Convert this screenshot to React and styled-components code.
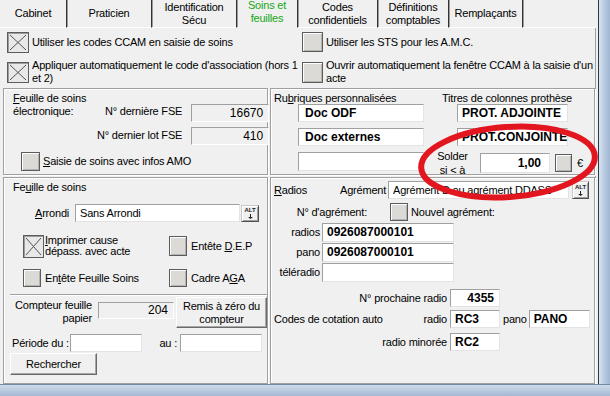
import React from "react";
import styled, { createGlobalStyle } from "styled-components";

const SANS = `"Liberation Sans", Arial, sans-serif`;
const UI_TEXT = `
  font-family: ${SANS};
  font-size: 11px;
  letter-spacing: -0.2px;
`;

const GlobalStyle = createGlobalStyle`
  html, body { margin: 0; padding: 0; background: #f0f0f0; }
  * { box-sizing: border-box; }
`;

const Screen = styled.div`
  position: relative;
  width: 610px;
  height: 396px;
  overflow: hidden;
  display: grid;
  grid-template-columns: 598px 12px;
  grid-template-rows: 384px 12px;
  background: #f0f0f0;
  ${UI_TEXT}
  line-height: 13px;
  color: #000;
`;

const Window = styled.div`
  display: flex;
  flex-direction: column;
  min-height: 0;
`;

const RightFrame = styled.div`
  border-left: 1px solid #2f3a48;
  background: linear-gradient(90deg, #d8e4f1 0, #bccee3 40%, #9fb6d1 100%);
`;

const BottomFrame = styled.div`
  grid-column: 1 / 3;
  border-top: 1px solid #7489a3;
  background: linear-gradient(180deg, #cfdcea 0, #b9cbe0 50%, #a3b8d2 100%);
`;

/* ---------- tabs ---------- */
const TabBar = styled.div`
  display: flex;
  height: 28px;
  margin-right: 2px;
`;

const Tab = styled.div`
  flex: none;
  width: ${(p) => p.$w}px;
  display: flex;
  align-items: center;
  justify-content: center;
  text-align: center;
  line-height: 13px;
  border-right: 1px solid #333;
  box-shadow: 1px 0 0 #9a9a9a;
  border-bottom: 1px solid ${(p) => (p.$active ? "#f0f0f0" : "#fff")};
  padding-bottom: ${(p) => (p.$active ? 4 : 0)}px;
  color: ${(p) => (p.$active ? "#14a814" : "#000")};
  white-space: nowrap;
`;

const TabFiller = styled.div`
  flex: 1;
  border-bottom: 1px solid #fff;
`;

/* ---------- panel ---------- */
const Panel = styled.div`
  flex: 1;
  display: flex;
  flex-direction: column;
  border-right: 1px solid #a0a0a0;
  margin-right: 2px;
  min-height: 0;
`;

const Options = styled.div`
  display: grid;
  grid-template-columns: 295px 1fr;
  align-content: start;
  row-gap: 6px;
  height: 60px;
  padding: 3px 0 0 7px;
`;

const Option = styled.label`
  display: flex;
  align-items: center;
  gap: 3px;
  height: ${(p) => p.$h}px;
  white-space: nowrap;
`;

const Groups = styled.div`
  flex: 1;
  display: grid;
  grid-template-columns: 265px 325px;
  grid-template-rows: 87px 1fr;
  gap: 2px;
  margin-left: 3px;
  min-height: 0;
`;

const Group = styled.section`
  border: 1px solid #a0a0a0;
  box-shadow: inset 1px 1px 0 #fff, 1px 1px 0 #fff;
  min-width: 0;
  min-height: 0;
`;

/* ---------- controls ---------- */
const BoxFrame = styled.span`
  flex: none;
  display: inline-flex;
  width: ${(p) => p.$w}px;
  height: ${(p) => p.$h}px;
  border: 1px solid #5c5c5c;
  background: ${(p) => (p.$checked ? "#e8e8e8" : "#dcdad6")};
  box-shadow: ${(p) =>
    p.$checked
      ? "inset 1px 1px 0 #9c9c9c"
      : "inset 1px 1px 0 #fdfdfd, inset -1px -1px 0 #b5b3af"};
`;

const Check = ({ checked, w = 21, h = 20 }) => (
  <BoxFrame $checked={checked} $w={w} $h={h}>
    {checked && (
      <svg width={w - 2} height={h - 2}>
        <line x1="2" y1="2" x2={w - 4} y2={h - 4} stroke="#555" strokeWidth="1" />
        <line x1={w - 4} y1="2" x2="2" y2={h - 4} stroke="#555" strokeWidth="1" />
      </svg>
    )}
  </BoxFrame>
);

const Field = styled.div`
  flex: none;
  width: ${(p) => p.$w}px;
  height: ${(p) => p.$h || 18}px;
  display: flex;
  align-items: center;
  justify-content: ${(p) => (p.$right ? "flex-end" : "flex-start")};
  padding: 0 ${(p) => (p.$right ? 5 : 4)}px 0 4px;
  background: ${(p) => (p.$ro ? "#f0f0f0" : "#fff")};
  border: 1px solid;
  border-color: ${(p) =>
    p.$ro ? "#a0a0a0 #fff #fff #a0a0a0" : "#a0a0a0 #e3e3e3 #e3e3e3 #a0a0a0"};
  font-family: ${SANS};
  font-size: ${(p) => (p.$plain ? "11px" : "12px")};
  letter-spacing: ${(p) => (p.$plain ? "-0.2px" : "0")};
  font-weight: ${(p) => (p.$bold ? 700 : 400)};
  white-space: nowrap;
  overflow: hidden;
`;

const AltFrame = styled.span`
  flex: none;
  width: ${(p) => p.$w}px;
  height: ${(p) => p.$h}px;
  display: flex;
  flex-direction: column;
  align-items: center;
  justify-content: center;
  gap: 1px;
  background: #f0f0f0;
  border: 1px solid;
  border-color: #c8c8c8 #505050 #505050 #c8c8c8;
  box-shadow: inset 1px 1px 0 #fff, inset -1px -1px 0 #a0a0a0;
  font: bold 6px/6px ${SANS};
  letter-spacing: 0;
  color: #222;
`;

const AltButton = ({ w = 18, h = 17 }) => (
  <AltFrame $w={w} $h={h}>
    <span>ALT</span>
    <svg width="5" height="5" viewBox="0 0 5 5">
      <path d="M2 0h1v3h2L2.5 5 0 3h2z" fill="#222" />
    </svg>
  </AltFrame>
);

const PushButton = styled.button`
  flex: none;
  width: ${(p) => p.$w}px;
  height: ${(p) => p.$h}px;
  padding: 0;
  background: #f0f0f0;
  color: #000;
  border: 1px solid;
  border-color: #fff #6a6a6a #6a6a6a #fff;
  box-shadow: inset -1px -1px 0 #a8a8a8;
  ${UI_TEXT}
  line-height: 13px;
`;

const Combo = styled(Field)`
  border-color: #a0a0a0 #e3e3e3 #e3e3e3 #a0a0a0;
`;

const Label = styled.span`
  flex: none;
  white-space: nowrap;
  width: ${(p) => (p.$w ? `${p.$w}px` : "auto")};
  text-align: ${(p) => p.$align || "left"};
`;

/* ---------- group 1 : FSE ---------- */
const FseGroup = styled(Group)`
  display: grid;
  grid-template-columns: 84px 1fr;
  align-content: start;
  padding: 3px 0 0 9px;
`;

const Title = styled.div`
  white-space: nowrap;
  line-height: 13px;
`;

const FieldStack = styled.div`
  display: flex;
  flex-direction: column;
  align-items: flex-end;
  gap: 5px;
  margin-top: 12px;
`;

const LabeledField = styled.div`
  display: flex;
  align-items: center;
  gap: 9px;
  & > ${Label} {
    margin-top: ${(p) => p.$lift}px;
  }
`;

const AmoRow = styled.label`
  grid-column: 1 / -1;
  display: flex;
  align-items: center;
  gap: 3px;
  margin: 7px 0 0 8px;
`;

/* ---------- group 2 : rubriques ---------- */
const RubGroup = styled(Group)`
  display: grid;
  grid-template-columns: 160px 1fr;
  align-items: start;
  padding-top: 3px;
`;

const RubColumn = styled.div`
  display: flex;
  flex-direction: column;
  gap: 6px;
  padding-left: 3px;
  & > ${Title} {
    margin-bottom: -7px;
  }
  & > ${Field} {
    margin-left: 24px;
  }
`;

const ProtColumn = styled.div`
  display: flex;
  flex-direction: column;
  gap: 6px;
  & > ${Title} {
    margin: 0 0 -7px 11px;
  }
  & > ${Field} {
    margin-left: 26px;
  }
`;

const SolderRow = styled.div`
  display: flex;
  align-items: center;
  margin: -3px 0 0 6px;
  gap: 5px;
`;

const SolderLabel = styled.span`
  width: 31px;
  margin-right: 7px;
  text-align: center;
  line-height: 14px;
`;

/* ---------- group 3 : feuille de soins ---------- */
const SoinsGroup = styled(Group)`
  display: flex;
  flex-direction: column;
  padding-top: 3px;
  & > ${Title} {
    margin-left: 9px;
  }
`;

const ArrondiRow = styled.div`
  display: flex;
  align-items: center;
  margin: 10px 0 0 31px;
  gap: 1px;
  & > ${Label} {
    margin-right: 6px;
  }
`;

const OptGrid = styled.div`
  display: grid;
  grid-template-columns: 146px 1fr;
  grid-template-rows: 24px 18px;
  row-gap: 11px;
  margin: 12px 0 0 19px;
`;

const OptItem = styled.label`
  display: grid;
  grid-template-columns: 22px auto;
  align-items: center;
  white-space: nowrap;
  line-height: ${(p) => (p.$tight ? 11 : 13)}px;
`;

const SubPanel = styled.div`
  display: flex;
  flex-direction: column;
  margin: 7px 0 0 6px;
  padding-top: 2px;
  border-top: 1px solid #a0a0a0;
  box-shadow: inset 0 1px 0 #fff;
`;

const CounterRow = styled.div`
  display: flex;
  align-items: flex-start;
`;

const CounterLabel = styled.span`
  width: 83px;
  margin-top: 2px;
  text-align: right;
  line-height: 13px;
`;

const PeriodRow = styled.div`
  display: flex;
  align-items: center;
  margin-top: 6px;
  padding-left: 2px;
`;

/* ---------- group 4 : radios ---------- */
const RadiosGroup = styled(Group)`
  display: flex;
  flex-direction: column;
  padding-top: 3px;
`;

const RadioTop = styled.div`
  display: flex;
  align-items: center;
  padding-left: 3px;
`;

const AgrRow = styled.div`
  display: flex;
  align-items: center;
  margin-top: 4px;
`;

const RadioFields = styled.div`
  display: grid;
  grid-template-columns: 49px 132px;
  grid-auto-rows: 19px;
  column-gap: 2px;
  row-gap: 1px;
  align-items: center;
  margin-top: 2px;
  & > ${Label} {
    text-align: right;
  }
`;

const CodeRow = styled.div`
  display: grid;
  grid-template-columns: 176px 50px auto;
  column-gap: 3px;
  align-items: center;
  margin-top: ${(p) => p.$mt}px;
`;

const CodeLabel = styled.span`
  display: flex;
  justify-content: space-between;
  padding-left: 3px;
  white-space: nowrap;
`;

const PanoCell = styled.div`
  display: flex;
  align-items: center;
  gap: 2px;
`;

const Annotation = styled.svg`
  position: absolute;
  left: 0;
  top: 0;
  pointer-events: none;
`;

const tabs = [
  { w: 67, label: ["Cabinet"] },
  { w: 85, label: ["Praticien"] },
  { w: 85, label: ["Identification", "Sécu"] },
  { w: 61, label: ["Soins et", "feuilles"], active: true },
  { w: 80, label: ["Codes", "confidentiels"] },
  { w: 71, label: ["Définitions", "comptables"] },
  { w: 74, label: ["Remplaçants"] },
];

const lines = (arr) =>
  arr.map((l, i) => (
    <React.Fragment key={i}>
      {i > 0 && <br />}
      {l}
    </React.Fragment>
  ));

export default function App() {
  return (
    <>
      <GlobalStyle />
      <Screen>
        <Window>
          <TabBar>
            {tabs.map((t) => (
              <Tab key={t.label[0]} $w={t.w} $active={t.active}>
                <span>{lines(t.label)}</span>
              </Tab>
            ))}
            <TabFiller />
          </TabBar>

          <Panel>
            <Options>
              <Option $h={22}>
                <Check checked w={22} h={21} />
                Utiliser les codes CCAM en saisie de soins
              </Option>
              <Option $h={22}>
                <Check w={21} h={20} />
                Utiliser les STS pour les A.M.C.
              </Option>
              <Option $h={26}>
                <Check checked w={22} h={21} />
                <span>
                  Appliquer automatiquement le code d'association (hors 1
                  <br />
                  et 2)
                </span>
              </Option>
              <Option $h={26}>
                <Check w={21} h={21} />
                <span>
                  Ouvrir automatiquement la fenêtre CCAM à la saisie d'un
                  <br />
                  acte
                </span>
              </Option>
            </Options>

            <Groups>
              <FseGroup>
                <Title>
                  <u>F</u>euille de soins
                  <br />
                  électronique:
                </Title>
                <FieldStack>
                  <LabeledField $lift={-3}>
                    <Label>N° dernière FSE</Label>
                    <Field $ro $right $w={78}>16670</Field>
                  </LabeledField>
                  <LabeledField $lift={-1}>
                    <Label>N° dernier lot FSE</Label>
                    <Field $ro $right $w={78}>410</Field>
                  </LabeledField>
                </FieldStack>
                <AmoRow>
                  <Check w={19} h={19} />
                  <span>
                    <u>S</u>aisie de soins avec infos AMO
                  </span>
                </AmoRow>
              </FseGroup>

              <RubGroup>
                <RubColumn>
                  <Title>
                    Ru<u>b</u>riques personnalisées
                  </Title>
                  <Field $bold $w={126} style={{ paddingLeft: 6 }}>Doc ODF</Field>
                  <Field $bold $w={126} style={{ paddingLeft: 6 }}>Doc externes</Field>
                  <Field $w={126} $h={19} />
                </RubColumn>
                <ProtColumn>
                  <Title>Titres de colonnes prothèse</Title>
                  <Field $bold $w={111}>PROT. ADJOINTE</Field>
                  <Field $bold $w={111}>PROT.CONJOINTE</Field>
                  <SolderRow>
                    <SolderLabel>
                      Solder
                      <br />
                      si &lt; à
                    </SolderLabel>
                    <Field $bold $right $w={70} $h={20} style={{ paddingRight: 8 }}>
                      1,00
                    </Field>
                    <Check w={17} h={18} />
                    <span>€</span>
                  </SolderRow>
                </ProtColumn>
              </RubGroup>

              <SoinsGroup>
                <Title>
                  Fe<u>u</u>ille de soins
                </Title>
                <ArrondiRow>
                  <Label $w={33} $align="right">
                    <u>A</u>rrondi
                  </Label>
                  <Combo $plain $w={165}>Sans Arrondi</Combo>
                  <AltButton w={18} h={17} />
                </ArrondiRow>
                <OptGrid>
                  <OptItem $tight>
                    <Check checked w={21} h={23} />
                    <span>
                      <u>I</u>mprimer cause
                      <br />
                      dépass. avec acte
                    </span>
                  </OptItem>
                  <OptItem>
                    <Check w={18} h={20} />
                    <span>
                      Entête <u>D</u>.E.P
                    </span>
                  </OptItem>
                  <OptItem>
                    <Check w={18} h={18} />
                    <span>
                      En<u>t</u>ête Feuille Soins
                    </span>
                  </OptItem>
                  <OptItem>
                    <Check w={18} h={18} />
                    <span>
                      Cadre A<u>G</u>A
                    </span>
                  </OptItem>
                </OptGrid>
                <SubPanel>
                  <CounterRow>
                    <CounterLabel>
                      Compteur feuille
                      <br />
                      papier
                    </CounterLabel>
                    <Field $ro $right $w={76} $h={17} style={{ margin: "5px 2px 0 6px" }}>
                      204
                    </Field>
                    <PushButton $w={91} $h={31}>
                      Remis à zéro du
                      <br />
                      compteur
                    </PushButton>
                  </CounterRow>
                  <PeriodRow>
                    <Label $w={58}>Période du :</Label>
                    <Field $w={72} $h={18} />
                    <Label $w={38} $align="right" style={{ paddingRight: 3 }}>
                      au :
                    </Label>
                    <Field $w={82} $h={18} />
                  </PeriodRow>
                  <PushButton $w={87} $h={22} style={{ marginTop: 1 }}>
                    Rechercher
                  </PushButton>
                </SubPanel>
              </SoinsGroup>

              <RadiosGroup>
                <RadioTop>
                  <Label $w={66}>
                    <u>R</u>adios
                  </Label>
                  <Label $w={46} $align="right" style={{ marginRight: 2 }}>
                    Agrément
                  </Label>
                  <Combo $plain $w={181}>Agrément D ou agrément DDASS</Combo>
                  <span style={{ width: 3 }} />
                  <AltButton w={17} h={18} />
                </RadioTop>
                <AgrRow>
                  <Label $w={96} $align="right" style={{ marginRight: 23 }}>
                    N° d'agrément:
                  </Label>
                  <Check w={18} h={18} />
                  <Label style={{ marginLeft: 3 }}>Nouvel agrément:</Label>
                </AgrRow>
                <RadioFields>
                  <Label>radios</Label>
                  <Field $bold $w={132} $h={19}>0926087000101</Field>
                  <Label>pano</Label>
                  <Field $bold $w={132} $h={19}>0926087000101</Field>
                  <Label>téléradio</Label>
                  <Field $w={132} $h={19} />
                </RadioFields>
                <CodeRow $mt={7}>
                  <CodeLabel>
                    <span />
                    <span>N° prochaine radio</span>
                  </CodeLabel>
                  <Field $bold $right $w={50}>4355</Field>
                </CodeRow>
                <CodeRow $mt={3}>
                  <CodeLabel>
                    <span>Codes de cotation auto</span>
                    <span>radio</span>
                  </CodeLabel>
                  <Field $bold $w={50}>RC3</Field>
                  <PanoCell>
                    <span>pano</span>
                    <Field $bold $w={61}>PANO</Field>
                  </PanoCell>
                </CodeRow>
                <CodeRow $mt={5}>
                  <CodeLabel>
                    <span />
                    <span>radio minorée</span>
                  </CodeLabel>
                  <Field $bold $w={50}>RC2</Field>
                </CodeRow>
              </RadiosGroup>
            </Groups>
          </Panel>
        </Window>
        <RightFrame />
        <BottomFrame />

        <Annotation width="610" height="396">
          <ellipse
            cx="508"
            cy="162"
            rx="87"
            ry="35"
            transform="rotate(-4 508 162)"
            fill="none"
            stroke="#e2161f"
            strokeWidth="6"
          />
        </Annotation>
      </Screen>
    </>
  );
}
